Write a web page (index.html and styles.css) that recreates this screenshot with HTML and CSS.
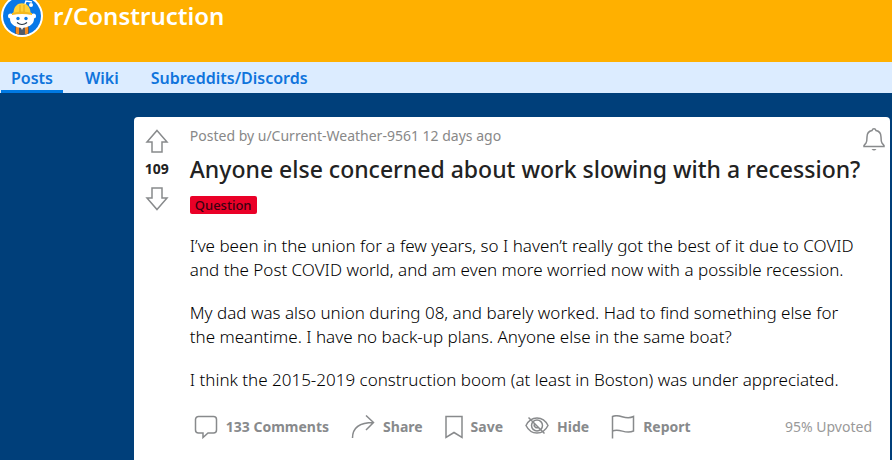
FILE: index.html
```
<!DOCTYPE html>
<html lang="en">
<head>
    <meta charset="UTF-8">
    <meta name="viewport" content="width=device-width, initial-scale=1.0">
    <title>r/Construction</title>
    <link rel="stylesheet" href="styles.css">
</head>
<body>
    <header class="banner">
        <svg class="avatar" viewBox="0 0 42 42" aria-hidden="true">
            <circle cx="21" cy="21" r="21" fill="#fff"/>
            <circle cx="21" cy="21" r="19" fill="#0878e8"/>
            <path d="M23 12l2-6 6 1" fill="none" stroke="#fff" stroke-width="1.5"/>
            <circle cx="30" cy="10" r="2" fill="#fff"/>
            <circle cx="9.500" cy="21" r="2.500" fill="#fff"/>
            <circle cx="32.500" cy="21" r="2.500" fill="#fff"/>
            <path d="M14 32l4-3h6l4 3v6.600a19 19 0 0 1-14 0z" fill="#555b66"/>
            <path d="M15 31l3 1v7.600l-3-1zM27 31l-3 1v7.600l3-1z" fill="#f58a1f"/>
            <path d="M19 31h4l-2 4z" fill="#fff"/>
            <ellipse cx="21" cy="24" rx="12" ry="9" fill="#fff"/>
            <path d="M12.500 18c0-13 17-13 17 0z" fill="#ffd23c"/>
            <path d="M11 18q10-3 20 0v2q-10-2-20 0z" fill="#f5b91e"/>
            <path d="M19 10v7M23 10v7" stroke="#e6a817"/>
            <circle cx="17" cy="23.500" r="1.700" fill="#0878e8"/>
            <circle cx="25" cy="23.500" r="1.700" fill="#0878e8"/>
            <path d="M16 27.500q5 4 10 0" fill="none" stroke="#234" stroke-width="1.200"/>
        </svg>
        <h1 class="community">r/Construction</h1>
    </header>

    <nav class="tabs">
        <a class="tab active" href="#posts">Posts</a>
        <a class="tab" href="#wiki">Wiki</a>
        <a class="tab" href="#discords">Subreddits/Discords</a>
    </nav>

    <main class="page">
        <article class="post">
            <div class="votes">
                <button class="icon-button" type="button" aria-label="Upvote">
                    <svg class="arrow" viewBox="0 0 24 24"><path d="M12 1.500L22 13h-5v10H7V13H2z"/></svg>
                </button>
                <span class="score">109</span>
                <button class="icon-button" type="button" aria-label="Downvote">
                    <svg class="arrow" viewBox="0 0 24 24"><path d="M12 22.500L22 11h-5V1H7v10H2z"/></svg>
                </button>
            </div>

            <div class="content">
                <div class="post-top">
                    <p class="meta">Posted by u/Current-Weather-9561 12 days ago</p>
                    <button class="icon-button bell" type="button" aria-label="Follow post">
                        <svg class="icon" viewBox="0 0 24 24"><path d="M2 18.500v-1l2-2.500c1-1.500 1-3 1-6 0-4 2.500-6 5-6.500C10.500 1 11 .8 12 .8s1.500.2 2 1.700c2.500.5 5 2.500 5 6.500 0 3 0 4.500 1 6l2 2.500v1z"/><path class="filled" d="M9.500 21h5q-2.500 3-5 0z"/></svg>
                    </button>
                </div>
                <h2 class="title">Anyone else concerned about work slowing with a recession?</h2>
                <span class="flair">Question</span>

                <div class="text">
                    <p>I’ve been in the union for a few years, so I haven’t really got the best of it due to COVID and the Post COVID world, and am even more worried now with a possible recession.</p>
                    <p>My dad was also union during 08, and barely worked. Had to find something else for the meantime. I have no back-up plans. Anyone else in the same boat?</p>
                    <p>I think the 2015-2019 construction boom (at least in Boston) was under appreciated.</p>
                </div>

                <div class="actions">
                    <button class="action" type="button">
                        <svg class="icon" viewBox="0 0 24 24"><path d="M4.500 1.500h15a3 3 0 0 1 3 3v10.500a3 3 0 0 1-3 3H14l-5 4.500V18H4.500a3 3 0 0 1-3-3V4.500a3 3 0 0 1 3-3z"/></svg>
                        133 Comments
                    </button>
                    <button class="action" type="button">
                        <svg class="icon" viewBox="0 0 24 24"><path d="M1.500 23C1.500 12 9 7.500 22.500 7.500M15 .5l7.500 7L15 15"/></svg>
                        Share
                    </button>
                    <button class="action" type="button">
                        <svg class="icon narrow" viewBox="0 0 18 24"><path d="M1 1.500h16v21l-8-5-8 5z"/></svg>
                        Save
                    </button>
                    <button class="action" type="button">
                        <svg class="icon" viewBox="0 0 24 24"><path d="M1 10.500C6 .5 18 .5 23 10.500 18 20.500 6 20.500 1 10.500zM3.500 2.500l16 16"/><circle cx="12" cy="10.500" r="5.500"/><path d="M9.500 8.500a3 3 0 0 0 4 4"/></svg>
                        Hide
                    </button>
                    <button class="action" type="button">
                        <svg class="icon" viewBox="0 0 24 24"><path d="M1.500 23.500V1.500C9-2 14 6 22.500 1.500V16C14 20 9 12.500 1.500 16"/></svg>
                        Report
                    </button>
                    <span class="upvoted">95% Upvoted</span>
                </div>
            </div>
        </article>
    </main>
</body>
</html>
```
FILE: styles.css
```
* {
    box-sizing: border-box;
}

body {
    margin: 0;
    min-height: 100vh;
    display: flex;
    flex-direction: column;
    background-color: #003f7a;
    color: #222;
    font-family: "Noto Sans", "Open Sans", sans-serif;
}

h1, h2, p {
    margin: 0;
}

button {
    padding: 0;
    border: none;
    background: none;
    font: inherit;
    color: inherit;
    cursor: pointer;
}

svg {
    display: block;
    flex: none;
}

/* Community header */
.banner {
    display: flex;
    align-items: center;
    gap: 10px;
    height: 62px;
    padding: 0 1px 31px;
    background-color: #ffb000;
}

.avatar {
    width: 42px;
    height: 42px;
}

.community {
    color: #fff;
    font-size: 24px;
    font-weight: 600;
    line-height: 32px;
}

.tabs {
    display: flex;
    gap: 12px;
    height: 31px;
    padding-left: 1px;
    background-color: #dcecff;
}

.tab {
    padding: 0 10px;
    border-bottom: 3px solid transparent;
    color: #0f74dc;
    font-size: 16px;
    font-weight: 600;
    line-height: 32px;
    text-decoration: none;
}

.tab.active {
    border-bottom-color: #0079e3;
}

/* Post card */
.page {
    flex: 1;
    display: flex;
    padding: 24px 2px 0 15%;
}

.post {
    flex: 1;
    display: flex;
    gap: 10px;
    padding-right: 4px;
    border-radius: 4px 4px 0 0;
    background-color: #fff;
}

.votes {
    display: flex;
    flex-direction: column;
    align-items: center;
    gap: 6px;
    width: 46px;
    padding-top: 12px;
    color: #888a8c;
}

.arrow {
    width: 24px;
    height: 24px;
}

.arrow path,
.icon path,
.icon circle {
    fill: none;
    stroke: currentColor;
    stroke-width: 1.5;
}

.icon .filled {
    fill: currentColor;
    stroke: none;
}

.score {
    color: #222;
    font-size: 14px;
    font-weight: 700;
    line-height: 20px;
    padding-bottom: 2px;
}

.content {
    flex: 1;
}

.post-top {
    display: flex;
    justify-content: space-between;
    height: 36px;
    padding-top: 9px;
}

.meta {
    color: #888;
    font-size: 14px;
    line-height: 20px;
}

.bell {
    color: #888a8c;
}

.icon {
    width: 24px;
    height: 24px;
}

.narrow {
    width: 18px;
}

.title {
    margin-bottom: 11px;
    font-size: 23px;
    font-weight: 500;
    line-height: 32px;
}

.flair {
    display: block;
    width: fit-content;
    padding: 0 5px;
    border-radius: 2px;
    background-color: #ea0027;
    color: #3a0010;
    font-size: 13px;
    font-weight: 500;
    line-height: 18px;
}

.text {
    padding: 20px 24px 0 0;
    color: #000;
    font-size: 17px;
    font-weight: 300;
    line-height: 24px;
}

.text p {
    margin-bottom: 19px;
}

.actions {
    display: flex;
    align-items: center;
    gap: 22px;
    padding: 4px 14px 0 4px;
    color: #888a8c;
    font-size: 14px;
    line-height: 20px;
}

.action {
    display: flex;
    align-items: center;
    gap: 8px;
    font-weight: 700;
}

.upvoted {
    margin-left: auto;
    color: #999;
}
```
